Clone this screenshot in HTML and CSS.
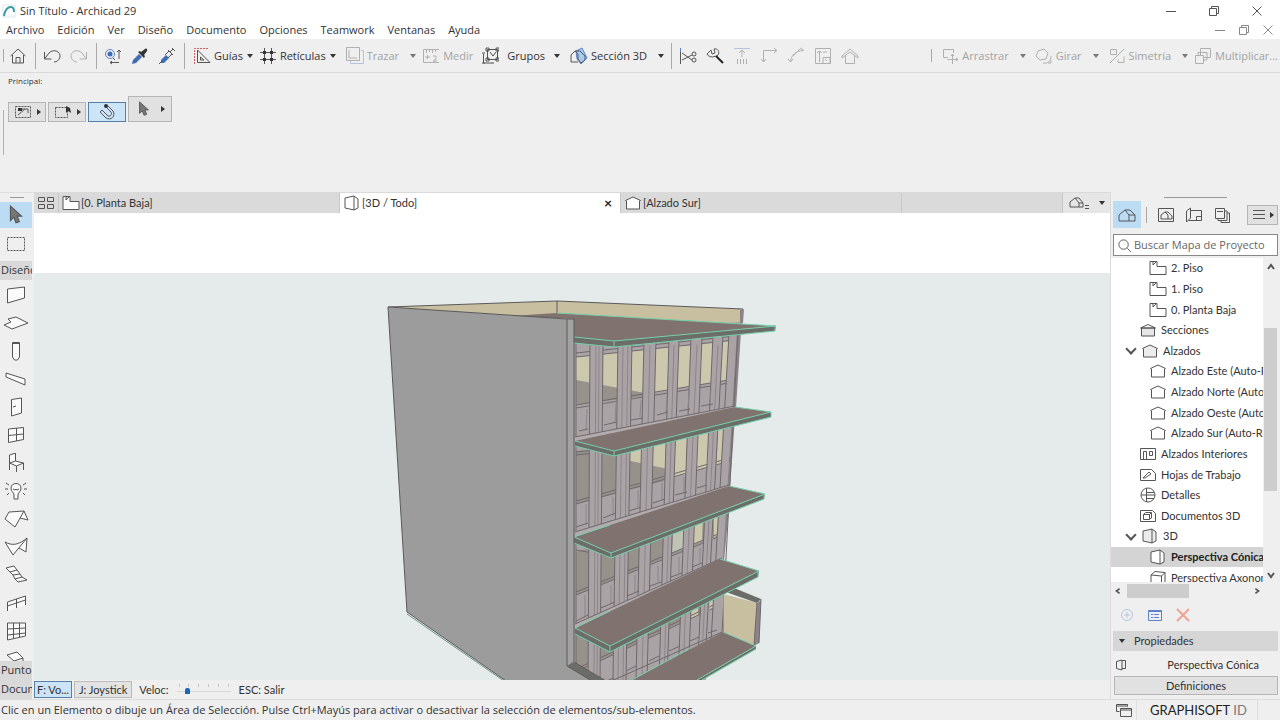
FILE: index.html
```html
<!DOCTYPE html>
<html lang="es">
<head>
    <meta charset="UTF-8">
    <meta name="viewport" content="width=device-width, initial-scale=1.0">
    <title>Sin Título - Archicad 29</title>
    <link rel="stylesheet" href="styles.css">
</head>
<body>

    <!-- Shared icons -->
    <svg class="defs" aria-hidden="true">
        <symbol id="i-plan" viewBox="0 0 18 16"><path d="M1 1.500h7v5h9v8H1zM4 2v3l3-3"/></symbol>
        <symbol id="i-elev" viewBox="0 0 18 16"><path d="M1.500 5.500L9 2l7.500 3.500L15.500 6v8h-13V6z"/></symbol>
        <symbol id="i-sect" viewBox="0 0 18 16"><path class="shade" d="M2.500 6h13v8h-13z"/><path d="M1.500 6L9 2.500 16.500 6z"/></symbol>
        <symbol id="i-box" viewBox="0 0 18 16"><path d="M2 3l9-2 4 3v9l-4 2-9-2zM11 1v14"/></symbol>
        <symbol id="i-axo" viewBox="0 0 18 16"><path d="M2 5l4-3.500 10 1V12l-3.500 3V6L2 5v10M12.500 6L16 2.500"/></symbol>
        <symbol id="i-arrow" viewBox="0 0 14 18"><path class="ptr" d="M2 1v13l3-3 2 5 3-1-2-5h4z"/></symbol>
        <symbol id="i-house" viewBox="0 0 18 16"><path d="M1 8l6-5 4 5v6H1zM7 3h5l5 5v6h-6M11 8h6"/></symbol>
        <symbol id="i-restore" viewBox="0 0 12 12"><path d="M1.500 3.500h7v7h-7zM3.500 3V1.500h7v7H9"/></symbol>
        <symbol id="i-close" viewBox="0 0 12 12"><path d="M1.500 1.500l9 9M10.500 1.500l-9 9"/></symbol>
        <symbol id="i-min" viewBox="0 0 12 12"><path d="M1 6.500h10"/></symbol>
    </svg>

    <header class="titlebar">
        <svg class="logo" viewBox="0 0 14 14"><path class="logo-box" d="M1 1h12v12H1z"/><path class="logo-arc" d="M2 12C3 6 6 3 9 3c2 0 3 2 3 5"/></svg>
        <h1>Sin Título - Archicad 29</h1>
        <div class="win-buttons">
            <button aria-label="Minimizar"><svg><use href="#i-min"/></svg></button>
            <button aria-label="Restaurar"><svg><use href="#i-restore"/></svg></button>
            <button aria-label="Cerrar"><svg><use href="#i-close"/></svg></button>
        </div>
    </header>

    <nav class="menubar">
        <a href="#">Archivo</a>
        <a href="#">Edición</a>
        <a href="#">Ver</a>
        <a href="#">Diseño</a>
        <a href="#">Documento</a>
        <a href="#">Opciones</a>
        <a href="#">Teamwork</a>
        <a href="#">Ventanas</a>
        <a href="#">Ayuda</a>
        <div class="doc-buttons">
            <button aria-label="Minimizar documento"><svg><use href="#i-min"/></svg></button>
            <button aria-label="Restaurar documento"><svg><use href="#i-restore"/></svg></button>
            <button aria-label="Cerrar documento"><svg><use href="#i-close"/></svg></button>
        </div>
    </nav>

    <div class="toolbar">
        <span class="sep short"></span>
        <button class="tool" aria-label="Inicio"><svg viewBox="0 0 18 18"><path d="M1.500 9L9 2l7.500 7M3.500 8v8h11V8M7 16v-5.500h4V16"/></svg></button>
        <span class="sep"></span>
        <button class="tool" aria-label="Deshacer"><svg viewBox="0 0 18 18"><path d="M1.500 5v7h7M1.500 12L6 6c5-5 12-1 11 4-1 3-3 5-6 5"/></svg></button>
        <button class="tool off" aria-label="Rehacer"><svg viewBox="0 0 18 18"><path d="M16.500 5v7h-7M16.500 12L12 6C7 1 0 5 1 10c1 3 3 5 6 5"/></svg></button>
        <span class="sep"></span>
        <button class="tool" aria-label="Encontrar"><svg viewBox="0 0 18 18"><circle class="blue" cx="6" cy="7" r="4.500"/><circle class="blue-fill" cx="6" cy="7" r="2.500"/><path d="M9 11l2 2M15 12V3l-2 2M15 3l2 2M6 15.500h9M8 14l-2 1.500L8 17"/></svg></button>
        <button class="tool" aria-label="Tomar parámetros"><svg viewBox="0 0 18 18"><path class="blue-fill" d="M1 17l1-4 6-6 3 3-6 6z"/><path class="ink" d="M7 5l6 6 1-2-1-1 3-4c1-2-1-3-2-2l-4 3-1-1z"/></svg></button>
        <button class="tool" aria-label="Inyectar parámetros"><svg viewBox="0 0 18 18"><path class="blue-fill" d="M3 13l5-5 3 3-5 5-3 0z"/><path d="M1 17l3-3M7 8l4-4 3 3-4 4M12 5l3-3M14 1l3 3M10 3l5 5"/></svg></button>
        <span class="sep"></span>
        <button class="tool label"><svg viewBox="0 0 18 18"><path class="red" d="M15 1.500H1.500V17"/><path d="M4.500 3v12.500H17zM7.500 10v3H11z"/></svg>Guías<i class="caret"></i></button>
        <button class="tool label"><svg viewBox="0 0 18 18"><path d="M5.500 1v16M12.500 1v16M1 5.500h16M1 12.500h16"/><path class="ink" d="M4 4h3v3H4zM11 4h3v3h-3zM4 11h3v3H4zM11 11h3v3h-3z"/></svg>Retículas<i class="caret"></i></button>
        <button class="tool label off wide"><svg viewBox="0 0 18 18"><path class="blue" d="M4.500 14v2.500h13v-13H15"/><path d="M.5.5h13v13H.5zM3 3v8h8"/></svg>Trazar<i class="caret"></i></button>
        <button class="tool label off measure"><svg viewBox="0 0 18 18"><path d="M17 2.500H1.500v13H17M4.500 3v3M7.500 3v2M10.500 3v3M13.500 3v2M3 10h5M5.500 8v4M11 9h3v3l-3 2h4"/></svg>Medir</button>
        <button class="tool label groups"><svg viewBox="0 0 18 18"><path d="M6.500 2.500h10v10h-10zM9 5l3 4 3-4M2.500 7v9h9M1 6h3M1 16h3M11 16h2M15 1h3v3h-3zM5 11h3v3H5zM15 11h3v3h-3zM5 1h3v3H5z"/></svg>Grupos<i class="caret"></i></button>
        <button class="tool label wide"><svg viewBox="0 0 18 18"><path class="blue-box" d="M6 4l6-3 5 10-6 6-4-5z"/><path d="M1 15V8l4-4h5l5 5v4l-4 3-3-4V7L5 4M1 15h7"/></svg>Sección 3D<i class="caret"></i></button>
        <span class="sep tall"></span>
        <button class="tool" aria-label="Cortar"><svg viewBox="0 0 18 18"><path class="blue" d="M1.500 1v4"/><path d="M1.500 5v12M3 6l10 7M3 13l10-5"/><circle cx="15" cy="7" r="2"/><circle cx="15" cy="13" r="2"/></svg></button>
        <button class="tool" aria-label="Ajustar"><svg viewBox="0 0 18 18"><path d="M1 7l4-4 1 4 3-1-1-4c4-1 6 3 4 6-2 2-4 1-5 2-3 0-5-1-6-3z"/><path class="thick" d="M10 9l7 7"/></svg></button>
        <button class="tool off" aria-label="Elevar"><svg viewBox="0 0 18 18"><path class="blue" d="M1 1.500h16"/><path d="M9 10V3M6 6l3-3 3 3M4.500 12v5M7.500 12v5M10.500 12v5M13.500 12v5"/></svg></button>
        <button class="tool off" aria-label="Esquina"><svg viewBox="0 0 18 18"><path d="M3.500 15V3.500H16M1 12l2.500 3L6 12M14 1l3 2.500L14 6"/></svg></button>
        <button class="tool off" aria-label="Empalme"><svg viewBox="0 0 18 18"><path d="M3.500 15C4 8 9 4 16 3.500M1 12l2.500 3L6 12M6 9l7-7M13 1l4 2.500"/></svg></button>
        <button class="tool off" aria-label="Redimensionar"><svg viewBox="0 0 18 18"><path d="M1.500 1.500h15v15h-15zM5.500 15V4M3 6l2.500-2L8 6M9 10.500h7v6H9zM9 5h4M11 12l2 2"/></svg></button>
        <button class="tool off" aria-label="Cubierta"><svg viewBox="0 0 18 18"><path d="M1 9l8-7 8 7v2L9 5l-8 6zM4.500 9v7.500h9V9"/></svg></button>
        <span class="spring"></span>
        <span class="sep short"></span>
        <button class="tool label off edit"><svg viewBox="0 0 18 18"><path d="M7 10.500H2.500v-8h10V6M11.500 7v10M6.500 12.500h10M10 9l1.500-2L13 9M15 11l2 1.500L15 14"/></svg>Arrastrar<i class="caret"></i></button>
        <button class="tool label off edit"><svg viewBox="0 0 18 18"><path d="M3 4l6-2 4 4-2 6-6 1-4-4zM8 16c5 1 8-2 8-7M13 16h3v-3"/></svg>Girar<i class="caret"></i></button>
        <button class="tool label off edit"><svg viewBox="0 0 18 18"><path d="M2.500 2.500h6v5h-6zM16 2L2 16M16 9.500v6h-6v-3"/></svg>Simetría<i class="caret"></i></button>
        <button class="tool label off last"><svg viewBox="0 0 18 18"><path d="M6.500 8V1.500h10v9H10M4 8V5.500h9V13h-3M1.500 8.500h8v8h-8z"/></svg>Multiplicar...</button>
    </div>

    <section class="infobox">
        <p>Principal:</p>
        <div class="info-row">
            <button aria-label="Método"><svg viewBox="0 0 18 14"><path class="dash" d="M1.500 1.500h15v11h-15z"/><path d="M4 10l7-6M5 4h9v4"/><path class="ink" d="M4 3h4v3H4z"/></svg><i class="play"></i></button>
            <button aria-label="Selección"><svg viewBox="0 0 18 14"><path class="dash" d="M1.500 2.500h12v10h-12z"/><path class="ink" d="M12 1v7l2-2 3 2-1-5z"/></svg><i class="play"></i></button>
            <button class="active" aria-label="Imán"><svg viewBox="0 0 18 16"><path d="M4 6l6 6c3 1 4-2 3-4L8 3M4 6L2 8l6 6c5 3 10-2 7-7l-5-5-2 1 5 5"/><circle class="ink" cx="8" cy="2" r="2"/></svg></button>
            <button class="big" aria-label="Flecha"><svg viewBox="0 0 14 18"><use href="#i-arrow"/></svg><i class="play"></i></button>
        </div>
    </section>

    <main class="workspace">
        <aside class="toolbox">
            <span class="grip"></span>
            <button class="active" aria-label="Flecha"><svg><use href="#i-arrow"/></svg></button>
            <button class="marquee" aria-label="Área de selección"><svg viewBox="0 0 26 20"><path class="dash" d="M4.500 3.500h17v13h-17z"/></svg></button>
            <h2>Diseño</h2>
            <div class="tools">
                <button aria-label="Muro"><svg viewBox="0 0 26 20"><path d="M4.500 4l17-2v11l-17 5z"/></svg></button>
                <button aria-label="Forjado"><svg viewBox="0 0 26 20"><path d="M5 6l8-2 12 6-16 6-8-4 7-3z"/></svg></button>
                <button aria-label="Pilar"><svg viewBox="0 0 26 20"><path d="M9.500 1.500h7V16l-2 3h-3l-2-3zM9.500 2.500h7"/></svg></button>
                <button aria-label="Viga"><svg viewBox="0 0 26 20"><path d="M3 4l19 6v6L3 8z"/></svg></button>
                <button aria-label="Puerta"><svg viewBox="0 0 26 20"><path d="M8.500 2.500l10-1.500v15l-10 3zM10 10l3-1"/></svg></button>
                <button aria-label="Ventana"><svg viewBox="0 0 26 20"><path d="M5.500 4l15-1.500v12l-15 3zM13.500 3v13M5.500 10.500l15-1.500"/></svg></button>
                <button aria-label="Objeto"><svg viewBox="0 0 26 20"><path d="M6.500 17V2l6-2v8l-6 2 7 3 7-3-8-2M13.500 13v6M20.500 10v7"/></svg></button>
                <button aria-label="Lámpara"><svg viewBox="0 0 26 20"><path d="M11 14c0-3-3-3-3-7 0-6 10-6 10 0 0 4-3 4-3 7v4h-4zM10 8l2 1 1-1 1 1 2-1M3 2l3 2M2 8h3M4 14l2-2M23 2l-3 2M24 8h-3M22 14l-2-2"/></svg></button>
                <button aria-label="Cubierta"><svg viewBox="0 0 26 20"><path d="M6 3l15-1-9 16-10-8zM21 2l4 9-8-2"/></svg></button>
                <button aria-label="Lámina"><svg viewBox="0 0 26 20"><path d="M2 5c7 4 14 3 22-4L10 18zM24 1l-1 14-7-4"/></svg></button>
                <button aria-label="Escalera"><svg viewBox="0 0 26 20"><path d="M3 3l8-2 3 4-7 2zM7 7l3 3 7-1-3-4M10 10l2 4 7-2-2-3M12 14l3 3 9-2-5-3"/></svg></button>
                <button aria-label="Barandilla"><svg viewBox="0 0 26 20"><path d="M4.500 18V9l18-6v9M4.500 13l18-6M13.500 6v9"/></svg></button>
                <button aria-label="Muro cortina"><svg viewBox="0 0 26 20"><path d="M4.500 2h18v13l-18 4zM10.500 2v15M16.500 2v14M4.500 8l18-1M4.500 14l18-2"/></svg></button>
                <button aria-label="Forma"><svg viewBox="0 0 26 20"><path d="M4 6l10-3 6 6-9 3zM20 9v6"/></svg></button>
            </div>
            <h2>Punto</h2>
            <h2>Docum</h2>
        </aside>

        <section class="center">
            <div class="tabs">
                <button class="grid-btn" aria-label="Ver pestañas"><svg viewBox="0 0 18 14"><path d="M1.500 1.500h6v4h-6zM10.500 1.500h6v4h-6zM1.500 8.500h6v4h-6zM10.500 8.500h6v4h-6z"/></svg></button>
                <button class="tab"><svg><use href="#i-plan"/></svg>[0. Planta Baja]</button>
                <button class="tab current"><svg><use href="#i-box"/></svg>[3D / Todo]<b>×</b></button>
                <button class="tab"><svg><use href="#i-elev"/></svg>[Alzado Sur]</button>
                <span class="tab rest"></span>
                <button class="tab-menu" aria-label="Opciones de vista"><svg viewBox="0 0 22 16"><path d="M1 7l5-4 4 5v4H1zM6 3h4l4 5v4h-4M10 8h4M16 10.500h4M16 13.500h4"/></svg><i class="caret"></i></button>
            </div>
            <div class="blank"></div>
            <div class="view3d">
                <svg viewBox="34 273 1076 407" preserveAspectRatio="xMidYMid slice" role="img" aria-label="Edificio">
                    <!-- roof parapet and roof slab -->
                    <path class="beige" d="M388 307L557 301 743 309 741 326 557 314 510 316z"/>
                    <path class="edge dark" d="M388 307L557 301 743 309M557 301v12"/>
                    <path class="face" d="M574 332L741 322 735 410 729 490 722 560 722 634 630 682 574 682z"/>
                    <path class="pillar" d="M740 310l4-1-1 14-3 1zM736 332l5-1-5 77-4-1zM732 418l3-1-5 71-3-1zM726 500l4-1-6 62-3-1z"/>

                    <!-- glass, one band per storey -->
                    <path class="glass" d="M576 357L731 341 729 380 576 405z"/>
                    <path class="dim" d="M576 380L645 393 645 396 576 405z"/>
                    <path class="glass" d="M576 455L726 423 724 463 576 504z"/>
                    <path class="dim" d="M576 451L626 445 626 460 668 469 668 480 576 504z"/>
                    <path class="dim" d="M576 552L720 503 718 536 576 595z"/>
                    <path class="glass" d="M694 515L703 511 702 541 693 545zM714 512L719 510 719 535 714 537z"/>
                    <path class="pale" d="M673 533L684 529 683 549 672 553z"/>
                    <path class="dim" d="M576 635L718 580 716 606 576 672z"/>
                    <path class="glass" d="M691 611L698 608 698 615 691 618zM709 602L714 600 714 607 709 610z"/>
                    <path class="edge" d="M576 353L735 336M576 357L735 340M576 405L735 379M576 408L735 382M576 452L620 447M576 455L620 450M576 501L730 458M576 504L730 461M576 550L610 556M576 592L723 532M576 595L723 535M576 669L720 602M576 672L720 605"/>

                    <!-- mullions -->
                    <path class="face" d="M590 340h13L600 680H588zM618 340h14L626 680H613zM644 340h12L647 680H636zM669 340h10L667 680H659zM691 330h11L688 680H678zM713 330h10L706 680H698zM729 330h8L718 640H711zM574 340h2v340h-2z"/>
                    <path class="edge" d="M576 340V680M590 340L588 680M603 340L600 680M618 340L613 680M632 340L626 680M644 340L636 680M656 340L647 680M669 340L659 680M679 340L667 680M691 338L678 680M702 338L688 680M713 336L698 660M723 335L706 645M729 334L711 642M738 330L722 634"/>
                    <path class="edge thin" d="M596 345L594 680M599 345L597 680M623 345L618 680M628 345L623 680M650 345L642 680M674 345L664 680M697 345L683 670M718 345L702 654"/>
                    <path class="edge thin" d="M587 409L586 430M616 404L615 422M641 400L640 417M667 396L666 412M689 393L688 408M711 389L710 403M586 504V525M613 497V516M638 490V507M662 483V500M684 477V492M706 471V486M585 595V617M611 585V604M635 575V592M658 566V582M679 557V573M700 548V563"/>
                    <path class="edge" d="M579 431l9-2M604 425l13-3M631 420l12-2M657 415l11-3M679 411l11-2M701 406l12-2M576 527l12-4M603 518l13-5M629 511l12-4M653 503l12-4M675 495l12-3M697 488l10-3M576 621l12-6M601 608l14-6M627 596l12-5M650 586l11-4M671 577l11-4M692 567l10-4M601 683l13-5M626 671l10-5M649 661l10-5M669 651l11-5M690 641l9-4M708 633l9-3"/>

                    <!-- sills -->
                    <path class="sill" d="M575 437L735 406 735 410 575 441zM575 532L729 485 729 489 575 537zM575 624L722 558 722 562 575 629z"/>
                    <path class="edge" d="M575 437L735 406M575 532L729 485M575 624L722 558M600 686L722 632"/>

                    <!-- ground floor terrace -->
                    <path class="beige" d="M723 594L757 603 755 646 723 633z"/>
                    <path class="cap" d="M726 592L734 588 761 599 757 603z"/>
                    <path class="pillar" d="M757 603L761 600 759 643 754 646z"/>
                    <path class="edge" d="M757 603L754 645M761 599L759 643M723 594v39"/>
                    <path class="slab" d="M723 632L756 646 697 680 632 680z"/>
                    <path class="cap" d="M756 646v3L702 680h-5z"/>
                    <path class="green" d="M723 632L756 646 697 680M690 648L632 680M756 649L702 680"/>

                    <!-- slabs -->
                    <path class="slab" d="M510 316L557 313 776 326 614 341 574 337V319z"/>
                    <path class="cap" d="M574 337L614 341 776 326 775 331 614 347 574 343z"/>
                    <path class="green" d="M557 313L776 326 614 341 574 337M574 343L614 347 775 331V326M614 341v6"/>
                    <path class="slab" d="M575 441L735 407 771 412 614 451z"/>
                    <path class="cap" d="M575 441L614 451 771 412V417L614 456 575 446z"/>
                    <path class="green" d="M735 407L771 412 614 451 575 441M575 446L614 456 771 417V412M614 451v5"/>
                    <path class="slab" d="M574 537L729 486 765 494 611 553z"/>
                    <path class="cap" d="M574 537L611 553 765 494 764 499 611 558 574 543z"/>
                    <path class="green" d="M729 486L765 494 611 553 574 537M574 543L611 558 764 499V494M611 553v5M574 537L610 525"/>
                    <path class="slab" d="M575 628L720 559 759 571 610 646z"/>
                    <path class="cap" d="M575 628L610 646 759 571 758 577 610 652 575 634z"/>
                    <path class="green" d="M720 559L759 571 610 646 575 628M575 634L610 652 758 577V571M610 646v6M575 628L610 611"/>

                    <!-- blind side wall -->
                    <path class="wall" d="M388 307L567 319 567 666 594 681H506L407 612z"/>
                    <path class="wall-front" d="M567 319h7V663l-7 4z"/>
                    <path class="cap" d="M567 666L573 662 606 681H592z"/>
                    <path class="edge dark" d="M388 307L567 319h7M388 307L407 612 506 681M567 319V666M574 319V662L606 681M567 666L592 681"/>
                    <path class="green soft" d="M407 614L504 681"/>
                </svg>
            </div>
            <div class="navbar">
                <button class="active">F: Vo...</button>
                <button>J: Joystick</button>
                <label for="speed">Veloc:</label>
                <div class="speed">
                    <div class="ticks"><i></i><i></i><i></i><i></i><i></i><i></i></div>
                    <input type="range" id="speed" min="0" max="6" value="1">
                </div>
                <span>ESC: Salir</span>
            </div>
        </section>

        <aside class="navigator">
            <span class="grip"></span>
            <div class="nav-tabs">
                <button class="active" aria-label="Mapa de Proyecto"><svg><use href="#i-house"/></svg></button>
                <span class="sep"></span>
                <button aria-label="Mapa de Vistas"><svg viewBox="0 0 18 16"><path d="M1.500 1.500h15v13h-15zM4 8l4-3 3 3v4H4zM8 5h3l4 4v3h-4"/></svg></button>
                <button aria-label="Libro de Planos"><svg viewBox="0 0 18 16"><path d="M1.500 4l4-3v10l-4 4zM5.500 3.500h11v10h-13M11.500 13V9.500h5"/></svg></button>
                <button aria-label="Publicador"><svg viewBox="0 0 18 16"><path d="M2.500 1.500h9v10h-9zM5 12v1.500h9V4h-2M8 14v1.500h8.500V6H14M4 4.500h6"/></svg></button>
                <button class="options" aria-label="Opciones"><svg viewBox="0 0 14 12"><path d="M1 1.500h12M1 5.500h12M1 9.500h12"/></svg><i class="play"></i></button>
            </div>
            <div class="search">
                <svg viewBox="0 0 16 16"><circle cx="7" cy="7" r="5"/><path d="M11 11l4 4"/></svg>
                <input type="text" placeholder="Buscar Mapa de Proyecto" aria-label="Buscar Mapa de Proyecto">
            </div>
            <div class="tree-wrap">
                <ul class="tree">
                    <li class="deep"><svg><use href="#i-plan"/></svg>2. Piso</li>
                    <li class="deep"><svg><use href="#i-plan"/></svg>1. Piso</li>
                    <li class="deep"><svg><use href="#i-plan"/></svg>0. Planta Baja</li>
                    <li><svg><use href="#i-sect"/></svg>Secciones</li>
                    <li class="open"><svg><use href="#i-elev"/></svg>Alzados</li>
                    <li class="deep"><svg><use href="#i-elev"/></svg>Alzado Este (Auto-R</li>
                    <li class="deep"><svg><use href="#i-elev"/></svg>Alzado Norte (Auto</li>
                    <li class="deep"><svg><use href="#i-elev"/></svg>Alzado Oeste (Auto</li>
                    <li class="deep"><svg><use href="#i-elev"/></svg>Alzado Sur (Auto-Re</li>
                    <li><svg viewBox="0 0 18 16"><path d="M1.500 2.500h15v11h-15zM4.500 13V5.500h3V13M10.500 5.500h3v4h-3z"/></svg>Alzados Interiores</li>
                    <li><svg viewBox="0 0 18 16"><path d="M1.500 2.500h11l4 4v7h-15zM4 11l6-6 2 2-6 4z"/></svg>Hojas de Trabajo</li>
                    <li><svg viewBox="0 0 18 16"><circle cx="9" cy="8" r="7"/><path d="M7.500 1v14M2 8h14M8 5.500h7M8 11.500h7"/></svg>Detalles</li>
                    <li><svg viewBox="0 0 18 16"><path d="M1.500 2.500h12l3 3v8h-15zM4.500 6.500h6v5h-6zM4.500 6.500l2-2h6l-2 2M12.500 5v5l-2 1"/></svg>Documentos 3D</li>
                    <li class="open"><svg><use href="#i-box"/></svg>3D</li>
                    <li class="deep selected"><svg><use href="#i-box"/></svg>Perspectiva Cónica</li>
                    <li class="deep"><svg><use href="#i-axo"/></svg>Perspectiva Axonom</li>
                </ul>
                <div class="vscroll">
                    <svg viewBox="0 0 10 8"><path d="M2 6l3-4 3 4"/></svg>
                    <span class="thumb"></span>
                    <svg viewBox="0 0 10 8"><path d="M2 2l3 4 3-4"/></svg>
                </div>
            </div>
            <div class="hscroll">
                <svg viewBox="0 0 8 10"><path d="M6 2L2 5l4 3"/></svg>
                <span class="thumb"></span>
                <svg viewBox="0 0 8 10"><path d="M2 2l4 3-4 3"/></svg>
            </div>
            <div class="actions">
                <button aria-label="Nuevo"><svg viewBox="0 0 14 14"><g class="faint"><circle cx="7" cy="7" r="5.500"/><path d="M7 4v6M4 7h6"/></g></svg></button>
                <button aria-label="Definiciones de vista"><svg viewBox="0 0 14 14"><path class="blue" d="M.5 2.500h13v10H.5zM1 3.500h12M3 6.500h2M6 6.500h5M3 9.500h2M6 9.500h5"/></svg></button>
                <button aria-label="Eliminar"><svg viewBox="0 0 14 14"><path class="salmon" d="M1 1l12 12M13 1L1 13"/></svg></button>
            </div>
            <button class="props"><i class="caret"></i>Propiedades</button>
            <div class="prop-name"><svg viewBox="0 0 12 12"><path d="M1.500 2.500L7 1v10l-5.500-1.500zM7 1.500h3.500v8H7"/></svg><span>Perspectiva Cónica</span></div>
            <button class="settings">Definiciones</button>
        </aside>
    </main>

    <footer class="statusbar">
        <p>Clic en un Elemento o dibuje un Área de Selección. Pulse Ctrl+Mayús para activar o desactivar la selección de elementos/sub-elementos.</p>
        <div class="brand">
            <svg viewBox="0 0 16 14"><path d="M3.500 8.500h-3v-7h11v2M.5 3h11M4.500 5.500h11v8h-11zM4.500 7h11"/></svg>
            <span><b>GRAPHISOFT</b> ID</span>
        </div>
    </footer>

</body>
</html>
```
FILE: styles.css
```css
* {
    box-sizing: border-box;
}

body {
    margin: 0;
    height: 100vh;
    display: flex;
    flex-direction: column;
    overflow: hidden;
    background: #efefef;
    color: #333;
    font-family: "Open Sans", "Noto Sans", sans-serif;
    font-size: 11px;
    line-height: 16px;
}

h1, h2, p, ul {
    margin: 0;
    padding: 0;
    font-size: inherit;
    font-weight: normal;
}

button {
    font: inherit;
    color: inherit;
    background: none;
    border: 0;
    padding: 0;
    display: flex;
    align-items: center;
    justify-content: center;
    flex: none;
    white-space: nowrap;
}

svg {
    width: 18px;
    height: 16px;
    flex: none;
    fill: none;
    stroke: #555;
}

.defs {
    position: absolute;
    width: 0;
    height: 0;
}

.ink {
    fill: #333;
    stroke: none;
}

.ptr {
    fill: #777;
    stroke: #555;
}

.blue {
    stroke: #5b83cc;
}

.blue-fill {
    fill: #3f6cb5;
    stroke: none;
}

.blue-box {
    fill: #a9cbf2;
    stroke: #5b83cc;
}

.red {
    stroke: #d06060;
    stroke-dasharray: 2 1;
}

.salmon {
    stroke: #eea493;
    stroke-width: 2;
}

.faint {
    stroke: #b5c5dd;
}

.shade {
    fill: #e6e6e6;
}

.thick {
    stroke: #222;
    stroke-width: 2;
}

.dash {
    stroke-dasharray: 2 1;
}

.caret {
    border: 3px solid transparent;
    border-top: 4px solid #333;
    border-bottom: 0;
}

.play {
    border: 3px solid transparent;
    border-left: 4px solid #333;
    border-right: 0;
}

.sep {
    width: 1px;
    height: 26px;
    background: #a8a8a8;
    flex: none;
}

/* Title and menu */
.titlebar, .menubar {
    display: flex;
    align-items: center;
    background: #fff;
    flex: none;
}

.titlebar {
    height: 21px;
    padding-left: 2px;
}

.logo {
    width: 14px;
    height: 14px;
    margin-right: 4px;
}

.logo-box {
    stroke: #dce8ea;
}

.logo-arc {
    stroke: #3a99a5;
    stroke-width: 2;
}

.win-buttons, .doc-buttons {
    display: flex;
    margin-left: auto;
}

.win-buttons button {
    width: 43px;
}

.win-buttons {
    padding-right: 2px;
}

.doc-buttons button {
    width: 24px;
}

.win-buttons svg, .doc-buttons svg {
    width: 12px;
    height: 12px;
}

.doc-buttons svg {
    stroke: #888;
}

.menubar {
    height: 18px;
    gap: 13px;
    padding-left: 6px;
}

    .menubar a {
        color: inherit;
        text-decoration: none;
    }

/* Toolbar */
.toolbar {
    display: flex;
    align-items: center;
    flex: none;
    height: 34px;
    padding-left: 3px;
    border-bottom: 1px solid #d9d9d9;
    overflow: hidden;
}

    .toolbar .sep {
        margin: 0 2px 0 4px;
    }

    .toolbar .sep.short {
        height: 13px;
        margin: 0;
    }

    .toolbar .sep.tall {
        margin-left: 7px;
    }

.tool {
    width: 27px;
    height: 28px;
}

    .tool svg {
        width: 18px;
        height: 18px;
    }

    .tool.label {
        width: auto;
        gap: 3px;
        padding-left: 6px;
    }

    .tool .caret {
        margin-left: 1px;
    }

    .tool.off {
        color: #a3a3a3;
    }

        .tool.off svg {
            stroke: #b0b0b0;
        }

        .tool.off .blue {
            stroke: #b3c4e0;
        }

        .tool.off .caret {
            border-top-color: #777;
        }

    .tool.wide {
        padding-left: 10px;
    }

        .tool.wide .caret {
            margin-left: 8px;
        }

    .tool.groups {
        gap: 8px;
    }

    .tool.measure {
        padding-right: 2px;
    }

    .tool.edit {
        padding-left: 9px;
    }

        .tool.edit .caret {
            margin-left: 8px;
        }

.spring {
    flex: 1;
}

.tool.last {
    padding-right: 2px;
}

/* Info box, with the drag handle line at its left */
.infobox {
    flex: none;
    height: 119px;
    padding: 0 8px;
    background: linear-gradient(#b0b0b0, #b0b0b0) 3px 37px / 1px 45px no-repeat;
}

    .infobox p {
        font-size: 8px;
        height: 23px;
    }

.info-row {
    display: flex;
    align-items: flex-end;
    gap: 2px;
}

    .info-row button {
        width: 38px;
        height: 20px;
        gap: 5px;
        background: #e1e1e1;
        border: 1px solid #b5b5b5;
    }

    .info-row .big {
        width: 44px;
        height: 26px;
        gap: 8px;
    }

    .info-row .active {
        background: #cce4f7;
        border-color: #5580a8;
    }

/* Workspace */
.workspace {
    flex: 1;
    min-height: 0;
    display: flex;
}

.toolbox {
    width: 34px;
    flex: none;
    display: flex;
    flex-direction: column;
    border-top: 1px solid #e0e0e0;
    overflow: hidden;
}

.grip {
    width: 14px;
    height: 1px;
    margin: 4px auto;
    background: #999;
    flex: none;
}

.toolbox button {
    height: 28px;
    width: 32px;
}

.toolbox svg {
    width: 26px;
    height: 20px;
}

.toolbox .tools svg {
    fill: #fafafa;
}

.toolbox .active {
    height: 26px;
    background: #bcdcf4;
}

.toolbox .marquee {
    height: 31px;
    margin-bottom: 2px;
}

.toolbox h2 {
    flex: none;
    width: 32px;
    height: 19px;
    padding: 1px 0 0 1px;
    background: #d9d9d9;
    overflow: hidden;
}

.tools {
    flex: 1;
    min-height: 0;
    padding-top: 1px;
    overflow: hidden;
}

.center {
    flex: 1;
    min-width: 0;
    display: flex;
    flex-direction: column;
}

.tabs {
    display: flex;
    flex: none;
    height: 21px;
    padding-top: 1px;
    background: #dadada;
}

.grid-btn {
    width: 25px;
    border-right: 1px solid #c8c8c8;
}

.tab {
    flex: 0 1 281px;
    justify-content: flex-start;
    gap: 1px;
    padding: 0 8px 0 3px;
    border-right: 1px solid #c8c8c8;
}

    .tab b {
        margin-left: auto;
        font-size: 14px;
        color: #222;
    }

    .tab.current {
        background: #fff;
    }

    .tab svg {
        fill: #fff;
    }

    .tab.rest {
        flex: 1;
    }

.tab-menu {
    width: 47px;
    gap: 8px;
    background: #e6e6e6;
}

    .tab-menu svg {
        width: 22px;
    }

.tab, .navbar, .tree, .prop-name, .props, .settings {
    font-family: Lato, "Open Sans", sans-serif;
}

.blank {
    flex: none;
    height: 60px;
    background: #fff;
}

.view3d {
    flex: 1;
    min-height: 0;
    background: #e5eaea;
}

    .view3d svg {
        display: block;
        width: 100%;
        height: 100%;
        stroke: none;
    }

.wall {
    fill: #9c9c9c;
}

.wall-front {
    fill: #a3a2a3;
}

.face {
    fill: #aaa3a6;
}

.sill {
    fill: #b3acaf;
}

.beige {
    fill: #c8bea0;
}

.glass {
    fill: #ccc8ad;
}

.pale {
    fill: #bfc4b6;
}

.dim {
    fill: #96918b;
}

.slab {
    fill: #80726e;
}

.cap {
    fill: #6c6c68;
}

.pillar {
    fill: #8a8488;
}

.edge {
    stroke: #6f686c;
}

.edge.dark {
    stroke: #5a5a5a;
}

.edge.thin {
    stroke: #8c8589;
}

.green {
    stroke: #74cfab;
}

.green.soft {
    stroke: #6f9483;
}

.edge, .green {
    fill: none;
}

.navbar {
    flex: none;
    height: 19px;
    display: flex;
    align-items: center;
    gap: 8px;
}

    .navbar button {
        height: 17px;
        padding: 0 4px;
        margin-right: -6px;
        background: #e3e3e3;
        border: 1px solid #bbb;
    }

    .navbar .active {
        padding: 0 2px;
        background: #cce4f7;
        border-color: #5580a8;
    }

    .navbar label {
        margin-left: 5px;
    }

.speed {
    width: 54px;
}

.ticks {
    display: flex;
    justify-content: space-between;
    padding: 0 2px;
}

    .ticks i {
        width: 1px;
        height: 3px;
        background: #c4c4c4;
    }

.speed input {
    display: block;
    appearance: none;
    width: 100%;
    height: 8px;
    margin: 0;
    background: linear-gradient(#d8d8d8, #d8d8d8) center / 100% 1px no-repeat;
}

    .speed input::-webkit-slider-thumb {
        appearance: none;
        width: 5px;
        height: 6px;
        border-radius: 2px 2px 0 0;
        background: #1b66b5;
    }

/* Navigator */
.navigator {
    width: 170px;
    flex: none;
    display: flex;
    flex-direction: column;
    border-left: 1px solid #dcdcdc;
    padding: 0 2px;
}

    .navigator .grip {
        width: 63px;
        margin: 5px auto 3px;
    }

.nav-tabs {
    display: flex;
    align-items: center;
    height: 27px;
    flex: none;
}

    .nav-tabs button {
        width: 28px;
        height: 27px;
    }

    .nav-tabs .sep {
        height: 16px;
        margin: 0 5px;
    }

    .nav-tabs .active {
        background: #bcdcf4;
    }

    .nav-tabs .options {
        width: 31px;
        height: 20px;
        margin-left: auto;
        gap: 4px;
        background: #e1e1e1;
        border: 1px solid #b5b5b5;
    }

.options svg {
    width: 14px;
    height: 12px;
}

.search {
    display: flex;
    align-items: center;
    flex: none;
    height: 22px;
    margin-top: 6px;
    padding-left: 3px;
    gap: 2px;
    background: #fff;
    border: 1px solid #888;
}

    .search svg {
        width: 15px;
        height: 15px;
    }

    .search input {
        flex: 1;
        min-width: 0;
        border: 0;
        padding: 0;
        outline: 0;
        font: inherit;
        background: none;
    }

        .search input::placeholder {
            color: #666;
        }

.tree-wrap {
    flex: 1;
    min-height: 0;
    display: flex;
    margin-top: 2px;
    margin-left: -2px;
    overflow: hidden;
}

.tree {
    flex: 1;
    min-width: 0;
    height: 330px;
    display: grid;
    grid-template-rows: repeat(16, 1fr);
    background: #fff;
    list-style: none;
}

    .tree li {
        display: flex;
        align-items: center;
        gap: 4px;
        min-width: 0;
        padding-left: 28px;
        white-space: nowrap;
        overflow: hidden;
    }

    .tree .deep {
        padding-left: 38px;
    }

    .tree .selected {
        font-weight: bold;
        background: #d4d4d4;
        color: #222;
    }

        .tree .selected svg {
            fill: #fff;
        }

    .tree .open {
        padding-left: 16px;
    }

        .tree .open::before {
            content: "";
            width: 6px;
            height: 6px;
            margin: -3px 2px 0 0;
            border: solid #555;
            border-width: 0 2px 2px 0;
            transform: rotate(45deg);
        }

        .tree .open svg {
            fill: #ececec;
        }

.vscroll {
    width: 15px;
    display: flex;
    flex-direction: column;
    align-items: center;
    padding: 5px 0 3px;
}

    .vscroll svg, .hscroll svg {
        width: 10px;
        height: 8px;
        stroke-width: 2;
    }

    .vscroll .thumb {
        width: 13px;
        height: 163px;
        margin: 57px 0 auto;
        background: #cdcdcd;
    }

.hscroll {
    display: flex;
    align-items: center;
    flex: none;
    height: 17px;
    padding-right: 16px;
}

    .hscroll .thumb {
        width: 62px;
        height: 14px;
        margin: 0 auto 0 4px;
        background: #cdcdcd;
    }

.actions {
    display: flex;
    align-items: center;
    flex: none;
    height: 32px;
    gap: 14px;
    padding-left: 7px;
}

    .actions svg {
        width: 14px;
        height: 14px;
    }

.props {
    justify-content: flex-start;
    height: 20px;
    gap: 9px;
    padding-left: 6px;
    background: #d6d6d6;
}

.prop-name {
    display: flex;
    align-items: center;
    justify-content: space-between;
    flex: none;
    height: 25px;
    padding: 2px 19px 0 2px;
}

    .prop-name svg {
        width: 12px;
        height: 12px;
    }

.settings {
    height: 19px;
    margin: 0 0 4px 1px;
    background: #e1e1e1;
    border: 1px solid #b5b5b5;
}

/* Status bar */
.statusbar {
    display: flex;
    align-items: center;
    justify-content: space-between;
    flex: none;
    height: 21px;
    border-top: 1px solid #dcdcdc;
}

    .statusbar p {
        padding-left: 1px;
    }

.brand {
    display: flex;
    align-items: center;
    width: 164px;
    gap: 4px;
    font-family: Lato, sans-serif;
    font-size: 13px;
    color: #777;
}

    .brand svg {
        width: 16px;
        height: 14px;
    }

    .brand span {
        padding: 2px 10px 2px 13px;
        border: solid #e0e0e0;
        border-width: 0 1px;
    }

    .brand b {
        font-weight: normal;
        color: #222;
    }
```
